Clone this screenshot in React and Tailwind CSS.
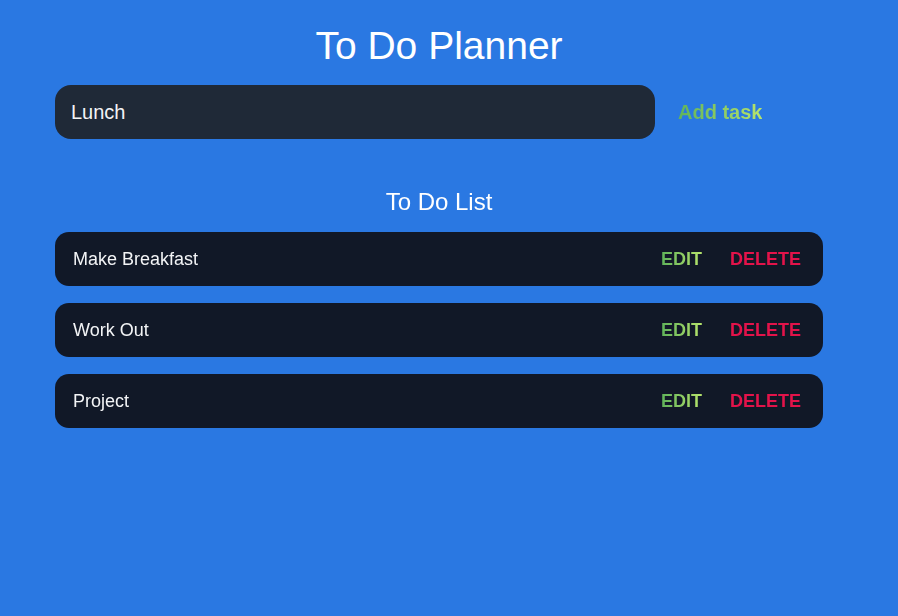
import React, { useState } from 'react'

const initialTasks = ['Make Breakfast', 'Work Out', 'Project']

function TaskRow({ name }) {
  return (
    <div className="flex items-center h-[54px] rounded-[14px] bg-[#111827] pl-[18px] pr-[22px]">
      <span className="flex-1 text-[18px] font-medium text-[#f3f4f6]">{name}</span>
      <button className="text-[18px] font-bold bg-gradient-to-r from-[#5fb35a] to-[#b6e46c] bg-clip-text text-transparent">
        EDIT
      </button>
      <button className="ml-[28px] text-[18px] font-bold text-[#e3134a]">DELETE</button>
    </div>
  )
}

export default function App() {
  const [task, setTask] = useState('Lunch')
  const [tasks] = useState(initialTasks)

  return (
    <div className="min-h-screen bg-[#2a78e2] font-['Liberation_Sans',Arial,sans-serif] text-white">
      <div className="w-[878px] pt-[22px]">
        <h1 className="text-center text-[39px] font-light leading-[48px]">To Do Planner</h1>

        <div className="mx-auto mt-[15px] flex w-[768px] items-center">
          <input
            autoFocus
            value={task}
            onChange={(e) => setTask(e.target.value)}
            className="h-[54px] w-[600px] rounded-[16px] bg-[#1f2937] px-[16px] text-[20px] text-[#f3f4f6] outline-none"
          />
          <button className="ml-[23px] text-[20px] font-bold bg-gradient-to-r from-[#5fb35a] to-[#b6e46c] bg-clip-text text-transparent">
            Add task
          </button>
        </div>

        <h2 className="mt-[47px] text-center text-[24px] font-light leading-[32px]">To Do List</h2>

        <div className="mx-auto mt-[14px] flex w-[768px] flex-col gap-[17px]">
          {tasks.map((t) => (
            <TaskRow key={t} name={t} />
          ))}
        </div>
      </div>
    </div>
  )
}
